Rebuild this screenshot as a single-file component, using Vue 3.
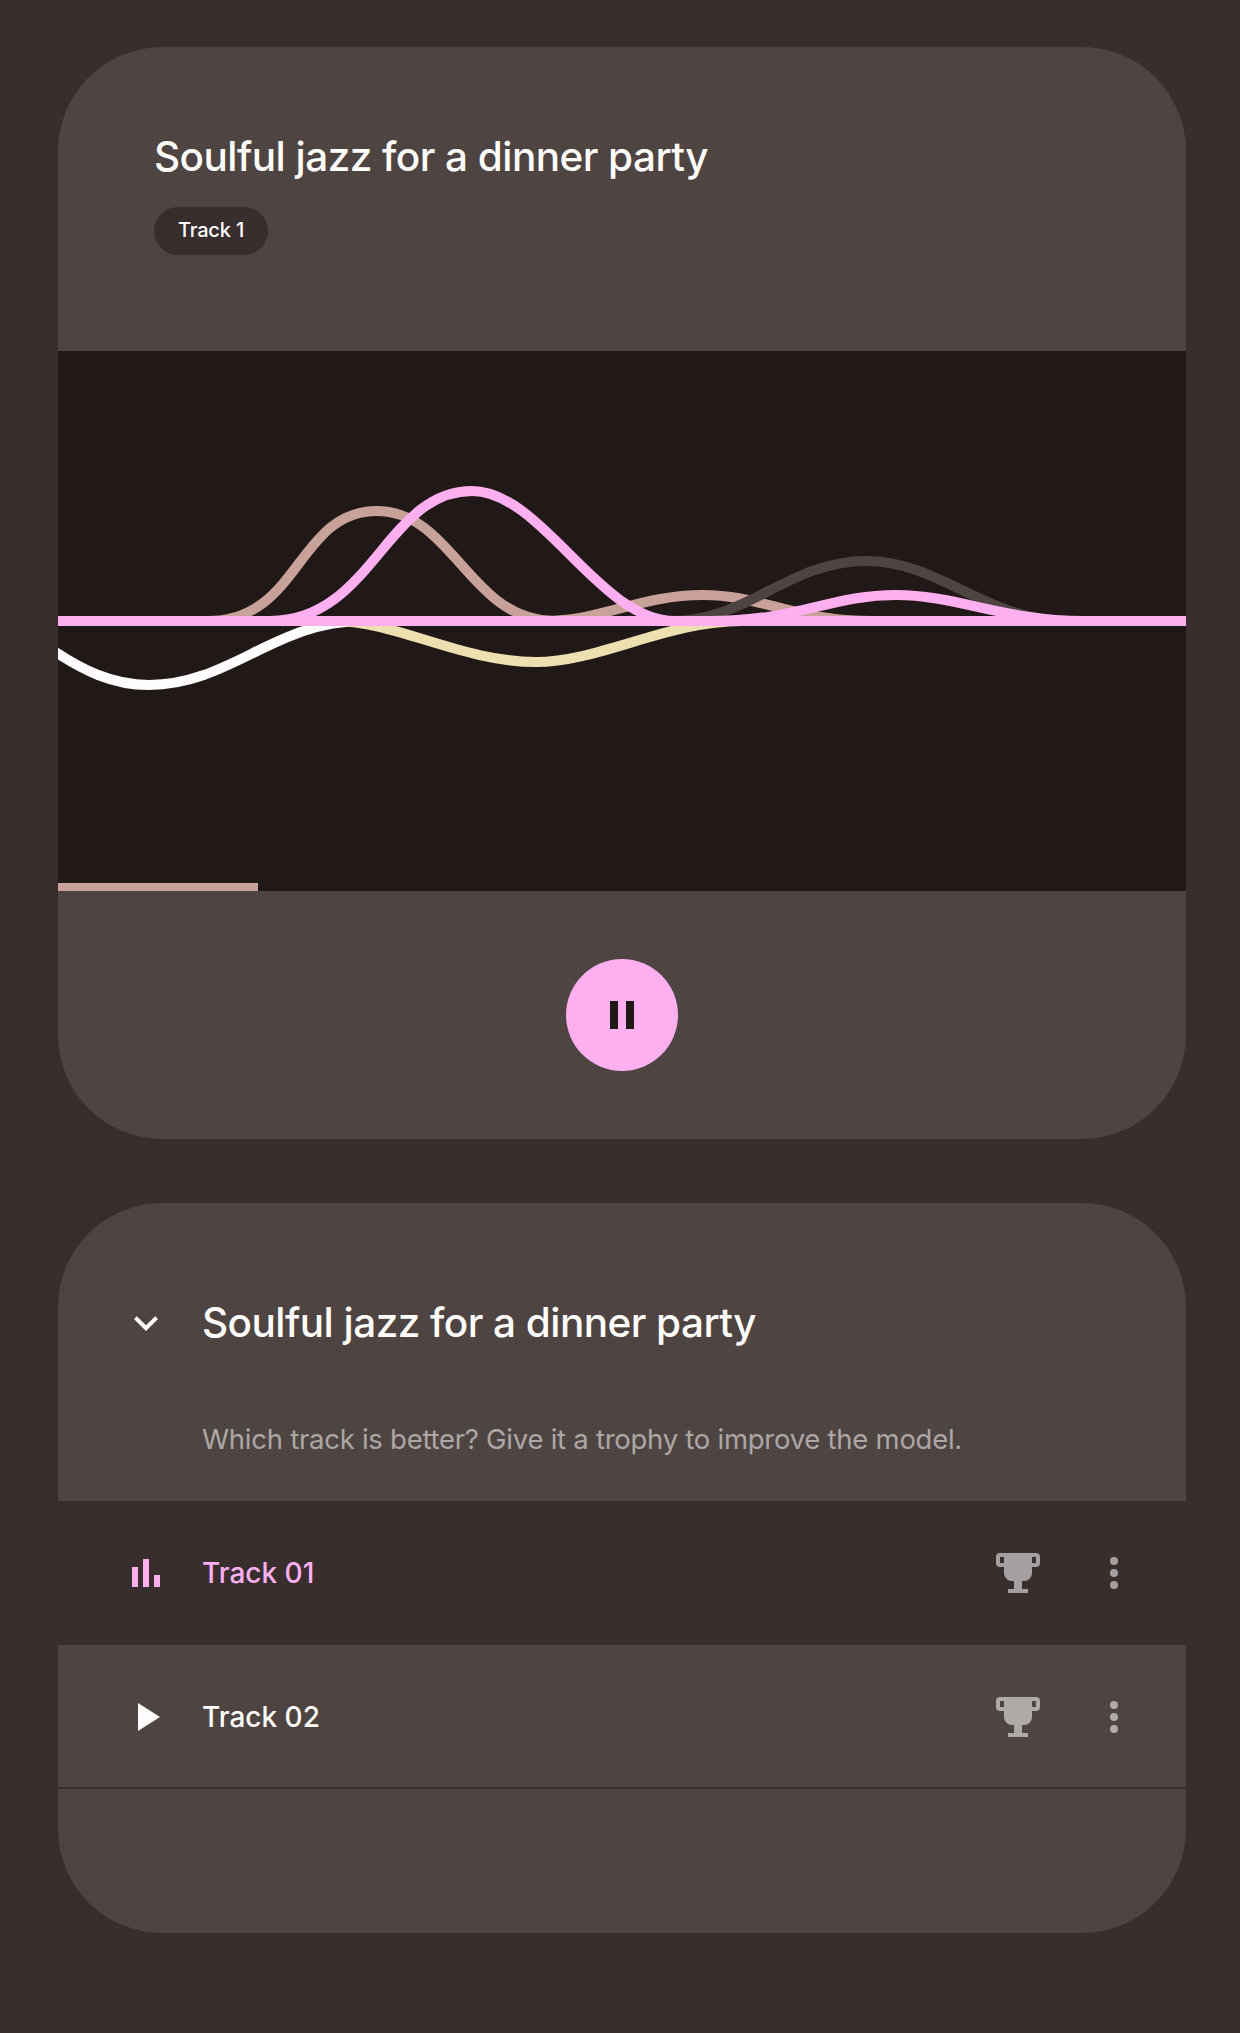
<script setup>
import { ref } from 'vue'

const title = 'Soulful jazz for a dinner party'
const progress = ref((200 / 1128) * 100)
const tracks = [
  { id: 1, name: 'Track 01', active: true },
  { id: 2, name: 'Track 02', active: false },
]
const waves = [
  { color: '#fffdfc', d: 'M-10 296C25 320 55 334 91 334C171 334 218 270 304 270' },
  { color: '#ece0b1', d: 'M277 270C337 270 405 311 478 311C541 311 609 270 684 270' },
  { color: '#c8a298', d: 'M150 270C242 270 239 160 319 160C395 160 412 270 496 270' },
  { color: '#c8a298', d: 'M486 270C544 270 582 244 645 244C704 244 735 270 816 270' },
  { color: '#4e4442', d: 'M612 270C692 270 729 210 809 210C881 210 928 270 1010 270' },
  { color: '#fdaff0', d: 'M212 270C314 270 328 140 414 140C484 140 541 270 617 270' },
  { color: '#fdaff0', d: 'M651 270C742 270 772 244 838 244C898 244 946 270 1026 270' },
  { color: '#fdaff0', d: 'M0 270H1128' },
]
</script>

<template>
  <main class="page">
    <section class="card">
      <header class="player-head">
        <h1 class="title">{{ title }}</h1>
        <span class="pill">Track 1</span>
      </header>
      <div class="visual">
        <svg class="waves" width="1128" height="540" viewBox="0 0 1128 540" fill="none">
          <path v-for="(w, i) in waves" :key="i" :d="w.d" :stroke="w.color" stroke-width="10" />
        </svg>
        <div class="progress" :style="{ width: progress + '%' }"></div>
      </div>
      <div class="controls">
        <button class="pause" aria-label="Pause">
          <svg width="24" height="28" viewBox="0 0 24 28"><path d="M0 0H8V28H0ZM16 0H24V28H16Z" fill="#211917" /></svg>
        </button>
      </div>
    </section>

    <section class="card list">
      <header class="list-head">
        <svg class="chevron" width="48" height="48" viewBox="0 0 24 24">
          <path d="M16.59 8.59 12 13.17 7.41 8.59 6 10l6 6 6-6z" fill="#fffdfc" />
        </svg>
        <h2 class="title">{{ title }}</h2>
      </header>
      <p class="hint">Which track is better? Give it a trophy to improve the model.</p>
      <div v-for="t in tracks" :key="t.id" class="row" :class="{ active: t.active }">
        <svg class="state" width="28" height="28" viewBox="0 0 28 28" fill="currentColor">
          <path v-if="t.active" d="M0 8H6V28H0ZM11 0H17V28H11ZM22 16H28V28H22Z" />
          <path v-else d="M6 0 28 14 6 28Z" />
        </svg>
        <span class="name">{{ t.name }}</span>
        <svg class="trophy" width="44" height="40" viewBox="0 0 44 40">
          <path
            fill="currentColor"
            fill-rule="evenodd"
            d="M4 0H40A4 4 0 0 1 44 4V10A4 4 0 0 1 40 14H36V20A8 8 0 0 1 28 28H26V36H32V40H12V36H18V28H16A8 8 0 0 1 8 20V14H4A4 4 0 0 1 0 10V4A4 4 0 0 1 4 0ZM4 4V10H8V4ZM36 4V10H40V4Z"
          />
        </svg>
        <svg class="more" width="8" height="32" viewBox="0 0 8 32" fill="currentColor">
          <circle cx="4" cy="4" r="4" />
          <circle cx="4" cy="16" r="4" />
          <circle cx="4" cy="28" r="4" />
        </svg>
      </div>
    </section>
  </main>
</template>

<style>
body {
  background: #382e2d;
}
</style>

<style scoped>
.page {
  box-sizing: border-box;
  width: 1240px;
  height: 2033px;
  padding: 47px 54px 100px 58px;
  display: flex;
  flex-direction: column;
  gap: 64px;
  background: #382e2d;
  color: #fffdfc;
  font-family: Inter, 'Liberation Sans', sans-serif;
}
.card {
  width: 1128px;
  border-radius: 104px;
  overflow: hidden;
  background: #4e4442;
}
.player-head {
  box-sizing: border-box;
  height: 304px;
  padding: 86px 96px 0;
  display: flex;
  flex-direction: column;
  align-items: flex-start;
  gap: 26px;
}
.title {
  margin: 0;
  font-size: 40.5px;
  line-height: 48px;
  font-weight: 450;
  letter-spacing: -0.55px;
  white-space: nowrap;
}
.pill {
  box-sizing: border-box;
  width: 114px;
  height: 48px;
  border-radius: 24px;
  background: #382e2d;
  text-align: center;
  font-size: 20px;
  line-height: 47px;
  font-weight: 450;
  letter-spacing: -0.15px;
}
.visual {
  height: 540px;
  display: flex;
  flex-direction: column;
  background: #211917;
}
.waves {
  display: block;
  flex: none;
  margin-bottom: -8px;
}
.progress {
  height: 8px;
  background: #c8a298;
}
.controls {
  height: 248px;
  display: flex;
  align-items: center;
  justify-content: center;
}
.pause {
  width: 112px;
  height: 112px;
  padding: 0;
  border: 0;
  border-radius: 50%;
  background: #fdaff0;
  display: flex;
  align-items: center;
  justify-content: center;
}
.list {
  height: 730px;
}
.list-head {
  display: flex;
  align-items: center;
  gap: 32px;
  padding: 96px 64px 0;
}
.chevron {
  margin-bottom: 4px;
}
.list-head .title {
  padding-bottom: 4px;
}
.hint {
  box-sizing: border-box;
  height: 150px;
  margin: 0;
  padding: 68px 0 0 144px;
  font-size: 27.5px;
  line-height: 40px;
  letter-spacing: -0.26px;
  color: rgba(255, 253, 252, 0.55);
  white-space: nowrap;
}
.row {
  box-sizing: border-box;
  height: 144px;
  padding: 0 68px 0 74px;
  display: flex;
  align-items: center;
  border-bottom: 2px solid #382e2d;
}
.active {
  background: #382e2d;
  color: #fdaff0;
}
.name {
  flex: 1;
  padding: 2px 0 0 42px;
  font-size: 28px;
  line-height: 40px;
  font-weight: 450;
}
.state {
  margin-top: 2px;
}
.trophy,
.more {
  color: #fffdfc;
  opacity: 0.55;
  margin-top: 2px;
}
.more {
  margin-left: 70px;
}
</style>
